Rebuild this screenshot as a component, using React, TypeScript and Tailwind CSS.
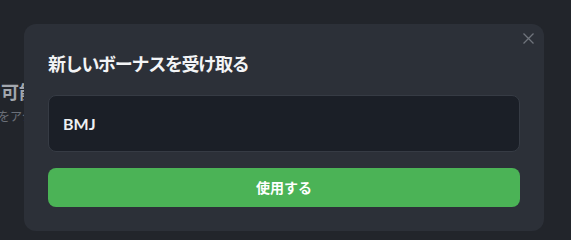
export default function App() {
  return (
    <div
      className="relative h-[240px] w-[571px] overflow-hidden bg-[#22252b]"
      style={{ fontFamily: "Lato, 'Noto Sans CJK JP', sans-serif" }}
    >
      {/* page behind the dialog */}
      <div className="flex flex-col pt-[78px]">
        <div className="ml-[-35px] whitespace-nowrap text-[18px] font-bold leading-[28px] text-[#a3a7ae]">
          利用可能なボーナス
        </div>
        <div className="ml-[-38px] mt-[2px] whitespace-nowrap text-[12px] leading-[18px] text-[#6b7079]">
          コードをアクティベート
        </div>
      </div>

      {/* dialog */}
      <div className="absolute left-[24px] top-[24px] w-[520px] rounded-[12px] bg-[#2c3038] px-6 pb-6 pt-[26px]">
        <button className="absolute right-[10px] top-[8px] flex h-[12px] w-[12px] items-center justify-center text-[#6f747c]">
          <svg width="11" height="11" viewBox="0 0 11 11" fill="none" stroke="currentColor" strokeWidth="1.3">
            <path d="M0.5 0.5L10.5 10.5M10.5 0.5L0.5 10.5" />
          </svg>
        </button>
        <h2 className="text-[18px] font-bold leading-[28px] tracking-[-1.3px] text-[#f3f4f6]">
          新しいボーナスを受け取る
        </h2>
        <div className="mt-[17px] flex h-[57px] items-center rounded-[8px] border border-[#363b44] bg-[#1b1f27] px-[14px]">
          <span className="text-[16px] font-bold text-[#eef0f2]">BMJ</span>
        </div>
        <button className="mt-4 flex h-[39px] w-full items-center justify-center rounded-[8px] bg-[#4bb356] text-[14px] font-bold text-white">
          使用する
        </button>
      </div>
    </div>
  );
}
